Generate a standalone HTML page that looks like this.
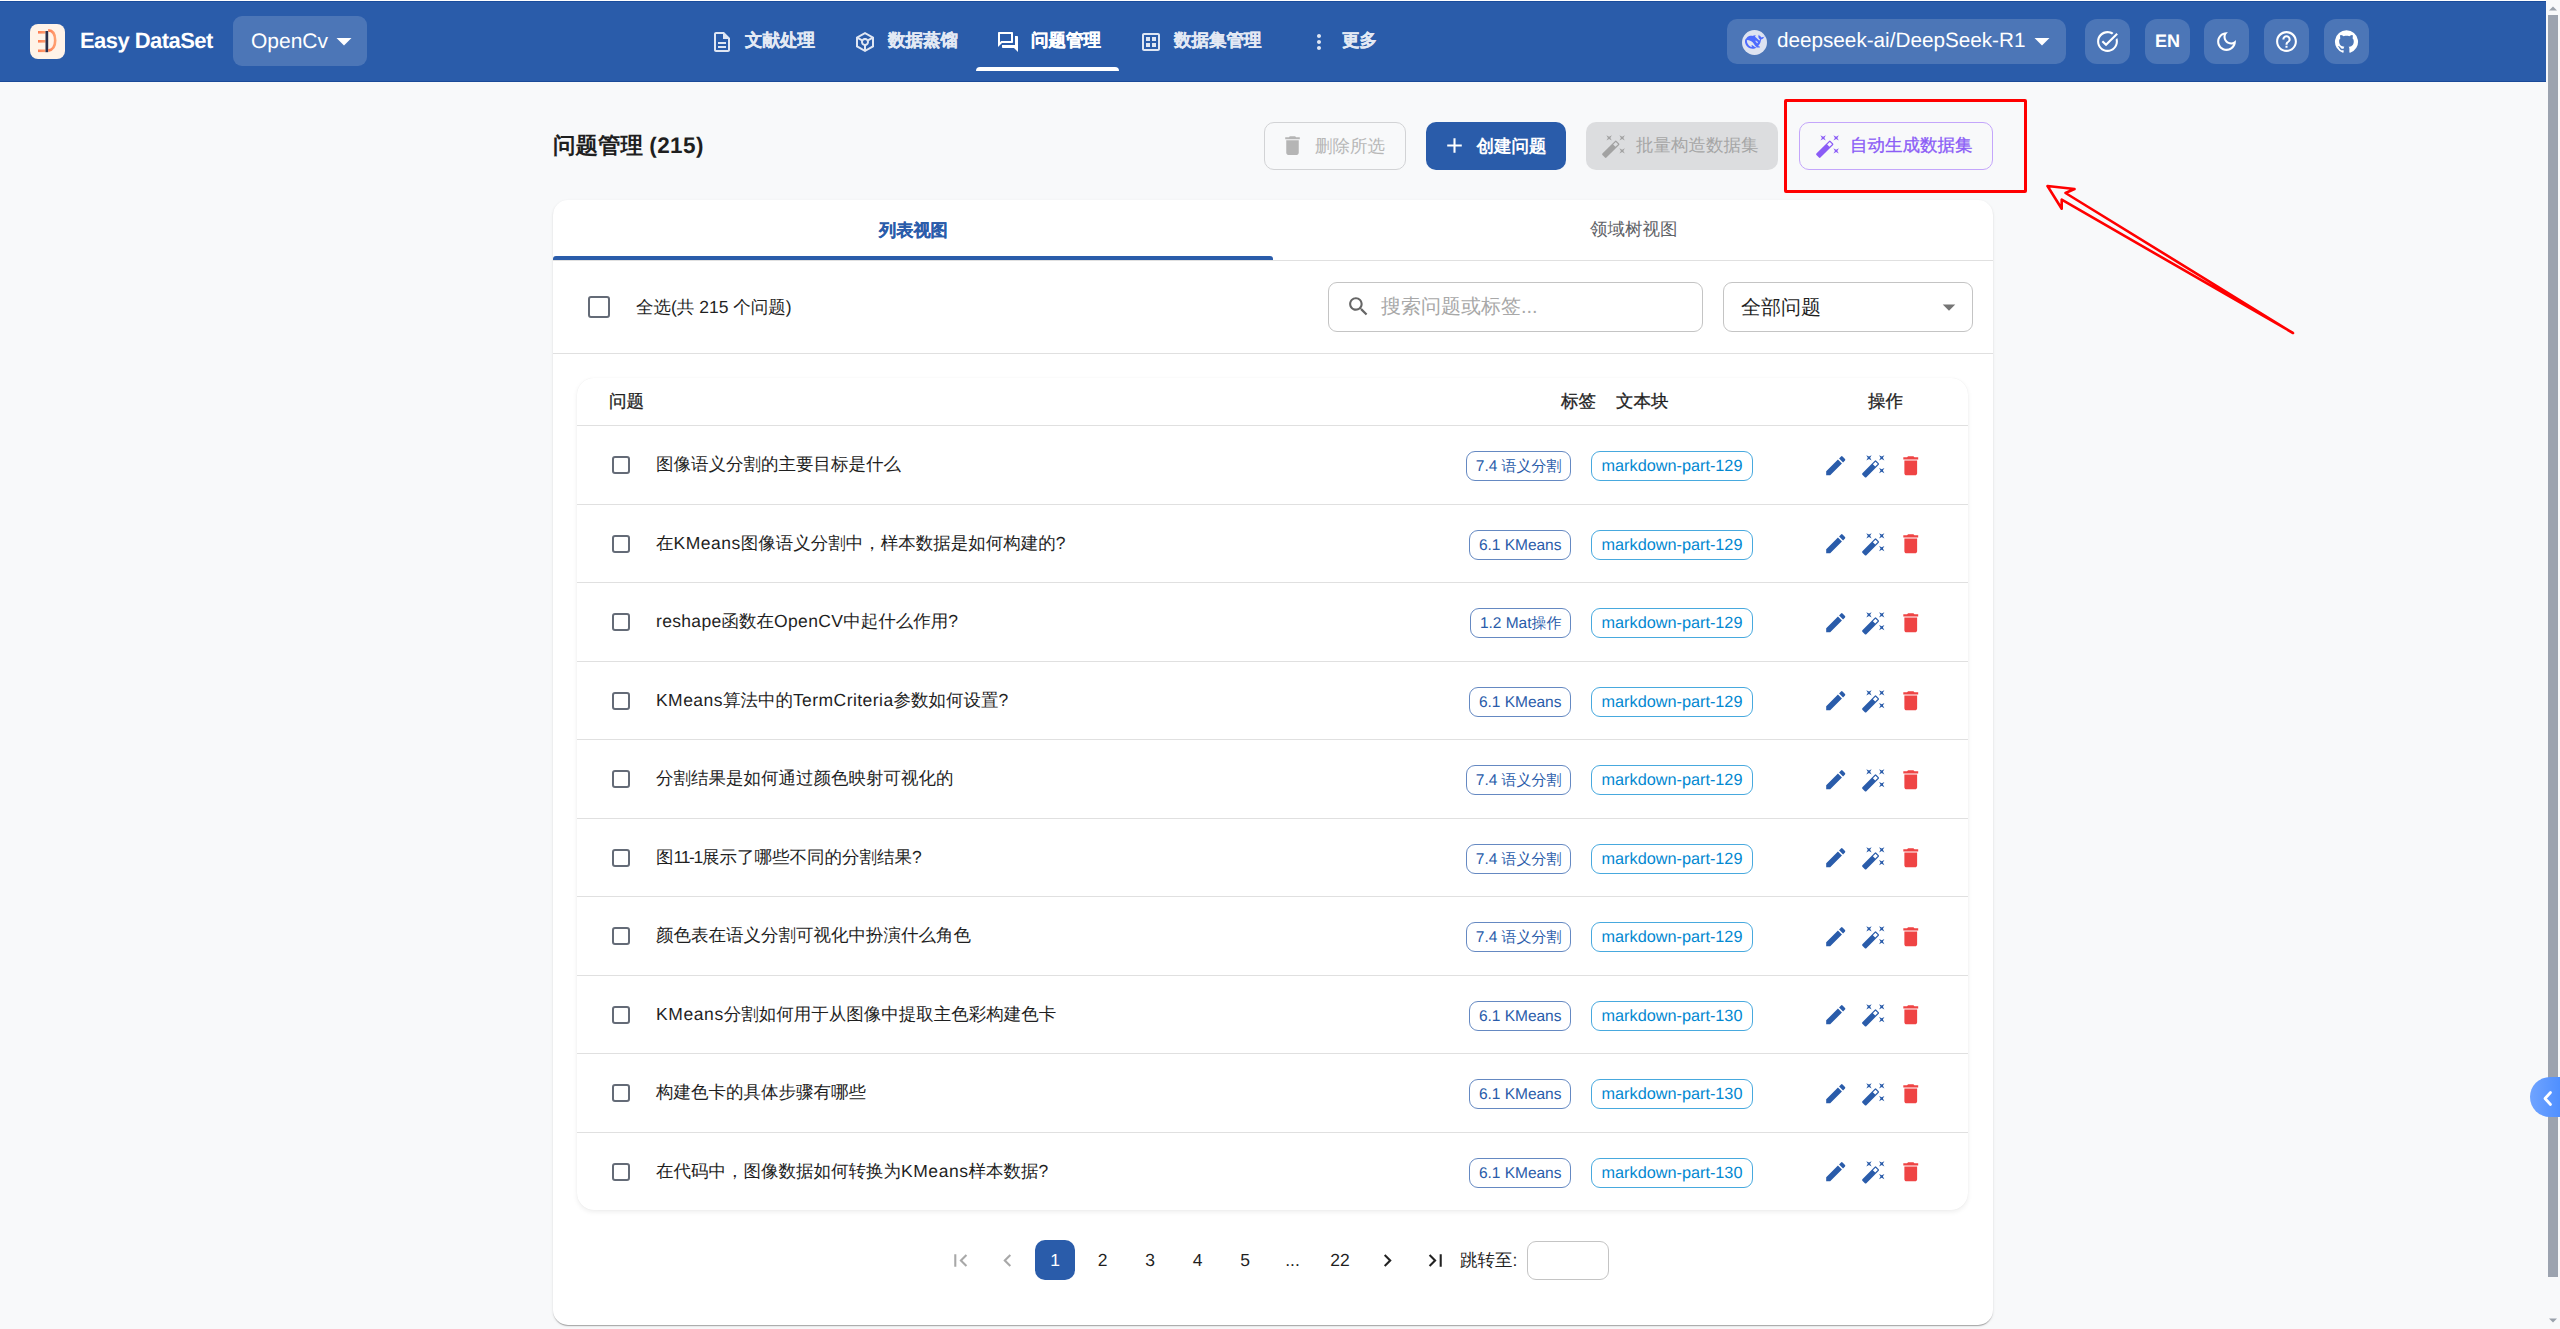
<!DOCTYPE html><html><head><meta charset="utf-8"><style>
*{box-sizing:border-box;margin:0;padding:0}
html,body{width:2560px;height:1329px;overflow:hidden;text-rendering:geometricPrecision;background:#f8f9fa;font-family:"Liberation Sans",sans-serif;color:#1f1f1f}
.abs{position:absolute}
svg{display:block}
.t{position:absolute;white-space:nowrap;line-height:20px}
#hdr{position:absolute;left:0;top:1px;width:2546px;height:81px;background:#2a5caa;border-top:1px solid #1a4c9c;border-bottom:1px solid #1a4a98}
#topline{position:absolute;left:0;top:0;width:2546px;height:1px;background:#fff}
.hbox{position:absolute;background:rgba(255,255,255,0.16);border-radius:10px}
.ibtn{position:absolute;top:19px;width:45px;height:45px;border-radius:12px;background:rgba(255,255,255,0.16)}
.nav{color:#e3e9f4;font-size:17.5px;font-weight:700;top:29.5px;-webkit-text-stroke:0.25px currentColor}
.btn{position:absolute;top:122px;height:48px;border-radius:10px;font-size:17.5px;line-height:20px;white-space:nowrap}
#card{position:absolute;left:553px;top:200px;width:1440px;height:1125px;background:#fff;border-radius:15px;box-shadow:0 2px 1px -1px rgba(0,0,0,0.2),0 1px 1px 0 rgba(0,0,0,0.1),0 1px 3px 0 rgba(0,0,0,0.1)}
#tblp{position:absolute;left:577px;top:378px;width:1391px;height:832px;background:#fff;border-radius:17px;box-shadow:0 2px 5px rgba(0,0,0,0.07),0 0 1px rgba(0,0,0,0.08)}
.rowline{position:absolute;left:577px;width:1391px;height:1px;background:#e0e0e0}
.cb{position:absolute;left:612px;width:18px;height:18px;border:2.4px solid #646b77;border-radius:3px}
.q{position:absolute;left:656px;font-size:17.5px;line-height:20px;color:#1f1f1f;white-space:nowrap}
.chip{position:absolute;height:30px;border-radius:9px;line-height:28px;text-align:center;white-space:nowrap}
.c1{right:989px;border:1px solid rgba(42,92,170,0.72);color:#2a5caa;padding:0 8.5px;font-size:15px;line-height:29.5px}
.c1 .l{font-size:15.5px}
.c2{left:1591px;width:162px;border:1px solid rgba(2,136,209,0.72);color:#0288d1;font-size:16.25px}
.pg{position:absolute;top:1240px;width:40px;height:40px;font-size:17.5px;line-height:40px;text-align:center;color:#1f1f1f}
.hd{font-size:17.5px;font-weight:400;-webkit-text-stroke:0.3px #1f1f1f;color:#1f1f1f;top:391px}
#scroll{position:absolute;left:2546px;top:0;width:14px;height:1329px;background:#f8f9fa}
</style></head><body>
<svg width="0" height="0" style="position:absolute"><defs><symbol id="i-edit" viewBox="0 0 24 24"><path d="M3 17.25V21h3.75L17.81 9.94l-3.75-3.75zM20.71 7.04c.39-.39.39-1.02 0-1.41l-2.34-2.34a.9959.9959 0 0 0-1.41 0l-1.83 1.83 3.75 3.75z"/></symbol><symbol id="i-wand" viewBox="0 0 24 24"><path d="M7.5 5.6 10 7 8.6 4.5 10 2 7.5 3.4 5 2l1.4 2.5L5 7zm12 9.8L17 14l1.4 2.5L17 19l2.5-1.4L22 19l-1.4-2.5L22 14zM22 2l-2.5 1.4L17 2l1.4 2.5L17 7l2.5-1.4L22 7l-1.4-2.5zm-7.63 5.29a.9959.9959 0 0 0-1.41 0L1.29 18.96c-.39.39-.39 1.02 0 1.41l2.34 2.34c.39.39 1.02.39 1.41 0L16.7 11.05c.39-.39.39-1.02 0-1.41zm-1.03 5.49-2.12-2.12 2.44-2.44 2.12 2.12z"/></symbol><symbol id="i-trash" viewBox="0 0 24 24"><path d="M6 19c0 1.1.9 2 2 2h8c1.1 0 2-.9 2-2V7H6zM19 4h-3.5l-1-1h-5l-1 1H5v2h14z"/></symbol></defs></svg>
<div id="topline"></div><div id="hdr"></div>
<div class="abs" style="left:30px;top:24px;width:35px;height:35px;border-radius:8px;background:#fff3e8"></div>
<svg class="abs" style="left:30px;top:24px" width="35" height="35" viewBox="0 0 35 35"><defs><linearGradient id="lg" x1="0" x2="1"><stop offset="0" stop-color="#ff7a50"/><stop offset="1" stop-color="#ffa070"/></linearGradient></defs><rect x="8" y="7" width="7.5" height="2.6" fill="url(#lg)"/><rect x="8" y="16" width="7.5" height="2.6" fill="url(#lg)"/><rect x="8" y="25.5" width="7.5" height="2.6" fill="url(#lg)"/><rect x="15.5" y="7" width="2.7" height="21.2" fill="#2b2f4a"/><path d="M18.2 6.4 C24.3 6.6 25.2 11.6 25.2 16.4 C25.2 21.4 23.6 25.6 18.2 26.6" fill="none" stroke="url(#lg)" stroke-width="2.6"/></svg>
<div class="abs" style="left:80px;top:28px;font-size:22px;font-weight:700;color:#fff;letter-spacing:-0.55px;line-height:25px;white-space:nowrap">Easy DataSet</div>
<div class="hbox" style="left:233px;top:16px;width:134px;height:50px;border-radius:9px"></div>
<div class="abs" style="left:251px;top:30px;font-size:21px;color:#fff;line-height:23px">OpenCv</div>
<svg class="abs" style="left:326px;top:23px" width="36" height="36" viewBox="0 0 24 24" fill="#fff"><path d="M7 10l5 5 5-5z"/></svg>
<svg class="abs" style="left:710px;top:30px" width="24" height="24" viewBox="0 0 24 24" fill="#dfe6f3"><path d="M8 16h8v2H8zm0-4h8v2H8zm6-10H6c-1.1 0-2 .9-2 2v16c0 1.1.89 2 1.99 2H18c1.1 0 2-.9 2-2V8zm4 18H6V4h7v5h5z"/></svg>
<div class="t nav" style="left:745px">文献处理</div>
<svg class="abs" style="left:853px;top:30px" width="24" height="24" viewBox="0 0 24 24" fill="#dfe6f3"><path d="m21 7-9-5-9 5v10l9 5 9-5zm-9-2.71 5.91 3.28-3.01 1.67C14.17 8.48 13.14 8 12 8s-2.170.48-2.9 1.24L6.09 7.57zm-1 14.87-6-3.33V9.26L8.13 11c-.09.31-.13.65-.13 1 0 1.86 1.27 3.43 3 3.87zM10 12c0-1.1.9-2 2-2s2 .9 2 2-.9 2-2 2-2-.9-2-2m3 7.16v-3.28c1.73-.44 3-2.01 3-3.87 0-.35-.04-.69-.13-1.01L19 9.26v6.57z"/></svg>
<div class="t nav" style="left:888px">数据蒸馏</div>
<svg class="abs" style="left:996px;top:30px" width="24" height="24" viewBox="0 0 24 24" fill="#fff"><path d="M15 4v7H5.17L4 12.17V4zm1-2H3c-.55 0-1 .45-1 1v14l4-4h10c.55 0 1-.45 1-1V3c0-.55-.45-1-1-1m5 4h-2v9H6v2c0 .55.45 1 1 1h11l4 4V7c0-.55-.45-1-1-1"/></svg>
<div class="t nav" style="left:1031px;color:#fff">问题管理</div>
<div class="abs" style="left:976px;top:67px;width:143px;height:4px;background:#fff;border-radius:4px 4px 0 0"></div>
<svg class="abs" style="left:1139px;top:30px" width="24" height="24" viewBox="0 0 24 24" fill="#dfe6f3"><path d="M19 3H5c-1.1 0-2 .9-2 2v14c0 1.1.9 2 2 2h14c1.1 0 2-.9 2-2V5c0-1.1-.9-2-2-2m0 16H5V5h14zM7 7h4v4H7zm6 0h4v4h-4zm-6 6h4v4H7zm6 0h4v4h-4z"/></svg>
<div class="t nav" style="left:1174px">数据集管理</div>
<svg class="abs" style="left:1307px;top:30px" width="24" height="24" viewBox="0 0 24 24" fill="#dfe6f3"><path d="M12 8c1.1 0 2-.9 2-2s-.9-2-2-2-2 .9-2 2 .9 2 2 2m0 2c-1.1 0-2 .9-2 2s.9 2 2 2 2-.9 2-2-.9-2-2-2m0 6c-1.1 0-2 .9-2 2s.9 2 2 2 2-.9 2-2-.9-2-2-2"/></svg>
<div class="t nav" style="left:1342px">更多</div>
<div class="hbox" style="left:1727px;top:19px;width:339px;height:45px"></div>
<div class="abs" style="left:1742px;top:30px;width:25px;height:25px;border-radius:50%;background:#dde3f1"></div>
<svg class="abs" style="left:1745px;top:32px" width="20" height="20" viewBox="0 0 24 24" fill="#4d6bfe"><path d="M23.7 4.9c-.25-.12-.36.11-.5.23-.05.04-.1.09-.14.13-.37.4-.8.65-1.36.62-.82-.05-1.52.2-2.14.83-.13-.77-.57-1.23-1.23-1.52-.35-.15-.7-.3-.94-.64-.17-.24-.22-.51-.3-.77-.05-.16-.1-.32-.29-.35-.2-.03-.28.14-.36.28-.3.56-.42 1.18-.41 1.8.03 1.4.62 2.5 1.79 3.3.13.09.17.18.13.32-.08.27-.18.53-.26.8-.05.17-.13.21-.31.14-.64-.27-1.2-.67-1.69-1.15-.83-.8-1.58-1.69-2.52-2.38-.22-.16-.44-.31-.67-.45-.96-.94.13-1.71.38-1.8.26-.1.09-.42-.76-.41-.85 0-1.62.29-2.6.66-.14.06-.3.1-.45.13-.9-.17-1.82-.21-2.78-.1-1.81.2-3.26 1.06-4.32 2.52C.06 8.6-.27 10.58.1 12.64c.38 2.18 1.49 3.98 3.2 5.39 1.77 1.46 3.8 2.18 6.12 2.04 1.41-.08 2.98-.27 4.750-1.77.45.22.92.31 1.69.38.59.06 1.17-.03 1.61-.12.7-.15.65-.8.4-.92-2.06-.96-1.61-.57-2.02-.89 1.05-1.24 2.63-2.53 3.25-6.72.05-.33.01-.54 0-.81 0-.16.03-.23.22-.25.51-.06 1.01-.2 1.48-.46 1.34-.73 1.88-1.94 2.01-3.38.02-.22 0-.45-.23-.56zM11.58 17.72c-2.01-1.58-2.98-2.1-3.39-2.08-.38.02-.31.46-.23.74.09.28.2.47.35.71.11.16.18.39-.1.56-.62.39-1.7-.13-1.75-.15-1.25-.74-2.3-1.71-3.04-3.04-.71-1.28-1.13-2.65-1.2-4.11-.02-.35.08-.48.44-.54.46-.09.94-.1 1.4-.03 1.97.29 3.64 1.17 5.04 2.56.8.79 1.4 1.74 2.03 2.67.67.99 1.39 1.93 2.3 2.7.32.27.58.48.82.63-.74.08-1.97.1-2.82-.57zm.93-5.98c0-.16.13-.28.29-.28.04 0 .07 0 .1.02.04.01.08.04.11.07.05.05.08.13.08.2 0 .16-.13.29-.29.29-.16 0-.29-.13-.29-.29zm2.87 1.48c-.18.08-.37.14-.55.15-.28.01-.59-.1-.76-.24-.26-.22-.45-.34-.52-.7-.03-.15-.01-.39.01-.52.06-.29-.01-.47-.21-.64-.16-.14-.37-.18-.6-.18-.09 0-.16-.04-.22-.07-.1-.05-.18-.17-.1-.33.03-.05.14-.17.17-.19.3-.17.65-.12.98.01.3.12.53.35.86.68.34.39.4.5.59.79.15.23.29.47.38.74.06.17-.02.31-.22.4z"/></svg>
<div class="abs" style="left:1777px;top:29px;font-size:20.7px;color:#fff;line-height:23px;white-space:nowrap">deepseek-ai/DeepSeek-R1</div>
<svg class="abs" style="left:2024px;top:23px" width="36" height="36" viewBox="0 0 24 24" fill="#fff"><path d="M7 10l5 5 5-5z"/></svg>
<div class="ibtn" style="left:2085px"></div>
<svg class="abs" style="left:2095px;top:29px" width="25" height="25" viewBox="0 0 24 24" fill="#fff"><path d="M22 5.18 10.59 16.6l-4.24-4.24 1.41-1.41 2.83 2.83 10-10L22 5.18zm-2.21 5.04c.13.57.21 1.17.21 1.78 0 4.42-3.58 8-8 8s-8-3.58-8-8 3.58-8 8-8c1.58 0 3.04.46 4.28 1.25l1.44-1.44C16.1 2.67 14.13 2 12 2 6.48 2 2 6.48 2 12s4.48 10 10 10 10-4.48 10-10c0-1.19-.22-2.33-.6-3.39l-1.61 1.61z"/></svg>
<div class="ibtn" style="left:2204px"></div>
<svg class="abs" style="left:2214px;top:29px" width="25" height="25" viewBox="0 0 24 24" fill="#fff"><path d="M9.37 5.51c-.18.64-.27 1.31-.27 1.99 0 4.08 3.32 7.4 7.4 7.4.68 0 1.35-.09 1.99-.27C17.45 17.19 14.93 19 12 19c-3.86 0-7-3.14-7-7 0-2.93 1.81-5.45 4.37-6.49M12 3c-4.97 0-9 4.03-9 9s4.03 9 9 9 9-4.03 9-9c0-.46-.04-.92-.1-1.36-.98 1.37-2.58 2.26-4.4 2.26-2.98 0-5.4-2.42-5.4-5.4 0-1.81.89-3.42 2.26-4.4-.44-.06-.9-.1-1.36-.1"/></svg>
<div class="ibtn" style="left:2264px"></div>
<svg class="abs" style="left:2274px;top:29px" width="25" height="25" viewBox="0 0 24 24" fill="#fff"><path d="M11 18h2v-2h-2zm1-16C6.48 2 2 6.48 2 12s4.48 10 10 10 10-4.48 10-10S17.52 2 12 2m0 18c-4.41 0-8-3.59-8-8s3.59-8 8-8 8 3.59 8 8-3.59 8-8 8m0-14c-2.21 0-4 1.79-4 4h2c0-1.1.9-2 2-2s2 .9 2 2c0 2-3 1.75-3 5h2c0-2.25 3-2.5 3-5 0-2.21-1.79-4-4-4"/></svg>
<div class="ibtn" style="left:2324px"></div>
<svg class="abs" style="left:2334px;top:29px" width="25" height="25" viewBox="0 0 24 24" fill="#fff"><path d="M12 1.27a11 11 0 00-3.48 21.46c.55.09.73-.28.73-.55v-1.84c-3.03.64-3.67-1.46-3.67-1.46-.55-1.29-1.28-1.65-1.28-1.65-.92-.65.1-.65.1-.65 1.1 0 1.73 1.1 1.73 1.1.92 1.65 2.57 1.2 3.21.92a2 2 0 01.64-1.47c-2.47-.27-5.04-1.19-5.04-5.5 0-1.1.46-2.1 1.2-2.84a3.76 3.76 0 010-2.93s.91-.28 3.11 1.1c1.8-.49 3.7-.49 5.5 0 2.1-1.38 3.02-1.1 3.02-1.1a3.76 3.76 0 010 2.93c.83.74 1.2 1.74 1.2 2.94 0 4.21-2.57 5.13-5.04 5.4.45.37.82.92.82 2.02v3.03c0 .27.1.64.73.55A11 11 0 0012 1.27"/></svg>
<div class="ibtn" style="left:2145px"></div><div class="abs" style="left:2145px;top:31px;width:45px;text-align:center;font-size:18px;font-weight:700;color:#fff;line-height:21px">EN</div>
<div class="abs" style="left:553px;top:133px;font-size:22.5px;font-weight:700;line-height:26px;color:#1f1f1f;white-space:nowrap">问题管理 <span style="letter-spacing:0.4px">(215)</span></div>
<div class="btn" style="left:1264px;width:142px;border:1px solid #d2d3d5"></div>
<svg class="abs" style="left:1280px;top:133px" width="25" height="25" viewBox="0 0 24 24" fill="#b5b5b5"><path d="M6 19c0 1.1.9 2 2 2h8c1.1 0 2-.9 2-2V7H6zM19 4h-3.5l-1-1h-5l-1 1H5v2h14z"/></svg>
<div class="t" style="left:1315px;top:135.5px;font-size:17.5px;color:#b7b7b7">删除所选</div>
<div class="btn" style="left:1426px;width:140px;background:#2a5caa"></div>
<svg class="abs" style="left:1442px;top:133px" width="25" height="25" viewBox="0 0 24 24" fill="#fff"><path d="M19 13h-6v6h-2v-6H5v-2h6V5h2v6h6z"/></svg>
<div class="t" style="left:1476.5px;top:135.5px;font-size:17.5px;color:#fff;font-weight:700">创建问题</div>
<div class="btn" style="left:1586px;width:192px;background:#dcdddf"></div>
<svg class="abs" style="left:1600.6px;top:132.8px" width="26" height="26" viewBox="0 0 24 24" fill="#a2a2a2"><path d="M7.5 5.6 10 7 8.6 4.5 10 2 7.5 3.4 5 2l1.4 2.5L5 7zm12 9.8L17 14l1.4 2.5L17 19l2.5-1.4L22 19l-1.4-2.5L22 14zM22 2l-2.5 1.4L17 2l1.4 2.5L17 7l2.5-1.4L22 7l-1.4-2.5zm-7.63 5.29a.9959.9959 0 0 0-1.41 0L1.29 18.96c-.39.39-.39 1.02 0 1.41l2.34 2.34c.39.39 1.02.39 1.41 0L16.7 11.05c.39-.39.39-1.02 0-1.41zm-1.03 5.49-2.12-2.12 2.44-2.44 2.12 2.12z"/></svg>
<div class="t" style="left:1636px;top:135px;font-size:17.5px;color:#a6a6a6">批量构造数据集</div>
<div class="btn" style="left:1799px;width:194px;border:1px solid #c4a6fb"></div>
<svg class="abs" style="left:1814.6px;top:132.8px" width="26" height="26" viewBox="0 0 24 24" fill="#8b5cf6"><path d="M7.5 5.6 10 7 8.6 4.5 10 2 7.5 3.4 5 2l1.4 2.5L5 7zm12 9.8L17 14l1.4 2.5L17 19l2.5-1.4L22 19l-1.4-2.5L22 14zM22 2l-2.5 1.4L17 2l1.4 2.5L17 7l2.5-1.4L22 7l-1.4-2.5zm-7.63 5.29a.9959.9959 0 0 0-1.41 0L1.29 18.96c-.39.39-.39 1.02 0 1.41l2.34 2.34c.39.39 1.02.39 1.41 0L16.7 11.05c.39-.39.39-1.02 0-1.41zm-1.03 5.49-2.12-2.12 2.44-2.44 2.12 2.12z"/></svg>
<div class="t" style="left:1850px;top:134.5px;font-size:17.5px;color:#8b5cf6;-webkit-text-stroke:0.3px #8b5cf6">自动生成数据集</div>
<div id="card"></div>
<div class="t" style="left:879px;top:219.5px;font-size:17.2px;font-weight:700;color:#2a5caa;-webkit-text-stroke:0.15px #2a5caa">列表视图</div>
<div class="t" style="left:1590px;top:219px;font-size:17.5px;color:#5f6368">领域树视图</div>
<div class="abs" style="left:553px;top:260px;width:1440px;height:1px;background:#e0e0e0"></div>
<div class="abs" style="left:553px;top:256px;width:720px;height:4px;background:#2a5caa;border-radius:3px 3px 0 0"></div>
<div class="abs" style="left:588px;top:296px;width:22px;height:22px;border:2.6px solid #646b77;border-radius:3px"></div>
<div class="t" style="left:636px;top:296.5px;font-size:17.5px">全选(共 215 个问题)</div>
<div class="abs" style="left:1328px;top:282px;width:375px;height:50px;border:1px solid #c4c4c4;border-radius:9px"></div>
<svg class="abs" style="left:1346px;top:294px" width="25" height="25" viewBox="0 0 24 24" fill="#666"><path d="M15.5 14h-.79l-.28-.27C15.41 12.59 16 11.11 16 9.5 16 5.91 13.09 3 9.5 3S3 5.91 3 9.5 5.91 16 9.5 16c1.61 0 3.09-.59 4.23-1.57l.27.28v.79l5 4.99L20.49 19zm-6 0C7.01 14 5 11.99 5 9.5S7.01 5 9.5 5 14 7.01 14 9.5 11.99 14 9.5 14"/></svg>
<div class="t" style="left:1381px;top:296.5px;font-size:20px;color:#a8a8a8">搜索问题或标签...</div>
<div class="abs" style="left:1723px;top:282px;width:250px;height:50px;border:1px solid #c4c4c4;border-radius:9px"></div>
<div class="t" style="left:1741px;top:298px;font-size:20px;color:#1f1f1f">全部问题</div>
<svg class="abs" style="left:1934px;top:292px" width="30" height="30" viewBox="0 0 24 24" fill="#757575"><path d="M7 10l5 5 5-5z"/></svg>
<div class="abs" style="left:553px;top:353px;width:1440px;height:1px;background:#e0e0e0"></div>
<div id="tblp"></div>
<div class="t hd" style="left:609px">问题</div>
<div class="t hd" style="left:1561px">标签</div>
<div class="t hd" style="left:1616px">文本块</div>
<div class="t hd" style="left:1868px">操作</div>
<div class="rowline" style="top:425px"></div>
<div class="cb" style="top:456.0px"></div>
<div class="q" style="top:454.0px">图像语义分割的主要目标是什么</div>
<div class="chip c1" style="top:451.0px"><span class="l">7.4</span> 语义分割</div>
<div class="chip c2" style="top:451.0px">markdown-part-129</div>
<svg class="abs" style="left:1822.5px;top:452.5px;fill:#2a5caa" width="25.5" height="25.5" viewBox="0 0 24 24"><use href="#i-edit"/></svg>
<svg class="abs" style="left:1860.5px;top:452.5px;fill:#2a5caa" width="25.5" height="25.5" viewBox="0 0 24 24"><use href="#i-wand"/></svg>
<svg class="abs" style="left:1897.5px;top:452.5px;fill:#ef4444" width="25.5" height="25.5" viewBox="0 0 24 24"><use href="#i-trash"/></svg>
<div class="rowline" style="top:504px"></div>
<div class="cb" style="top:534.5px"></div>
<div class="q" style="top:532.5px">在<span style="letter-spacing:0.5px">KMeans</span>图像语义分割中，样本数据是如何构建的<span style="letter-spacing:0.5px">?</span></div>
<div class="chip c1" style="top:529.5px"><span class="l">6.1</span> <span class="l">KMeans</span></div>
<div class="chip c2" style="top:529.5px">markdown-part-129</div>
<svg class="abs" style="left:1822.5px;top:531.0px;fill:#2a5caa" width="25.5" height="25.5" viewBox="0 0 24 24"><use href="#i-edit"/></svg>
<svg class="abs" style="left:1860.5px;top:531.0px;fill:#2a5caa" width="25.5" height="25.5" viewBox="0 0 24 24"><use href="#i-wand"/></svg>
<svg class="abs" style="left:1897.5px;top:531.0px;fill:#ef4444" width="25.5" height="25.5" viewBox="0 0 24 24"><use href="#i-trash"/></svg>
<div class="rowline" style="top:582px"></div>
<div class="cb" style="top:613.0px"></div>
<div class="q" style="top:611.0px"><span style="letter-spacing:0.33px">reshape</span>函数在<span style="letter-spacing:0.33px">OpenCV</span>中起什么作用<span style="letter-spacing:0.33px">?</span></div>
<div class="chip c1" style="top:608.0px"><span class="l">1.2</span> <span class="l">Mat</span>操作</div>
<div class="chip c2" style="top:608.0px">markdown-part-129</div>
<svg class="abs" style="left:1822.5px;top:609.5px;fill:#2a5caa" width="25.5" height="25.5" viewBox="0 0 24 24"><use href="#i-edit"/></svg>
<svg class="abs" style="left:1860.5px;top:609.5px;fill:#2a5caa" width="25.5" height="25.5" viewBox="0 0 24 24"><use href="#i-wand"/></svg>
<svg class="abs" style="left:1897.5px;top:609.5px;fill:#ef4444" width="25.5" height="25.5" viewBox="0 0 24 24"><use href="#i-trash"/></svg>
<div class="rowline" style="top:661px"></div>
<div class="cb" style="top:691.5px"></div>
<div class="q" style="top:689.5px"><span style="letter-spacing:0.45px">KMeans</span>算法中的<span style="letter-spacing:0.45px">TermCriteria</span>参数如何设置<span style="letter-spacing:0.45px">?</span></div>
<div class="chip c1" style="top:686.5px"><span class="l">6.1</span> <span class="l">KMeans</span></div>
<div class="chip c2" style="top:686.5px">markdown-part-129</div>
<svg class="abs" style="left:1822.5px;top:688.0px;fill:#2a5caa" width="25.5" height="25.5" viewBox="0 0 24 24"><use href="#i-edit"/></svg>
<svg class="abs" style="left:1860.5px;top:688.0px;fill:#2a5caa" width="25.5" height="25.5" viewBox="0 0 24 24"><use href="#i-wand"/></svg>
<svg class="abs" style="left:1897.5px;top:688.0px;fill:#ef4444" width="25.5" height="25.5" viewBox="0 0 24 24"><use href="#i-trash"/></svg>
<div class="rowline" style="top:739px"></div>
<div class="cb" style="top:770.0px"></div>
<div class="q" style="top:768.0px">分割结果是如何通过颜色映射可视化的</div>
<div class="chip c1" style="top:765.0px"><span class="l">7.4</span> 语义分割</div>
<div class="chip c2" style="top:765.0px">markdown-part-129</div>
<svg class="abs" style="left:1822.5px;top:766.5px;fill:#2a5caa" width="25.5" height="25.5" viewBox="0 0 24 24"><use href="#i-edit"/></svg>
<svg class="abs" style="left:1860.5px;top:766.5px;fill:#2a5caa" width="25.5" height="25.5" viewBox="0 0 24 24"><use href="#i-wand"/></svg>
<svg class="abs" style="left:1897.5px;top:766.5px;fill:#ef4444" width="25.5" height="25.5" viewBox="0 0 24 24"><use href="#i-trash"/></svg>
<div class="rowline" style="top:818px"></div>
<div class="cb" style="top:848.5px"></div>
<div class="q" style="top:846.5px">图<span style="letter-spacing:-1.3px">11-1</span>展示了哪些不同的分割结果<span style="letter-spacing:-1.3px">?</span></div>
<div class="chip c1" style="top:843.5px"><span class="l">7.4</span> 语义分割</div>
<div class="chip c2" style="top:843.5px">markdown-part-129</div>
<svg class="abs" style="left:1822.5px;top:845.0px;fill:#2a5caa" width="25.5" height="25.5" viewBox="0 0 24 24"><use href="#i-edit"/></svg>
<svg class="abs" style="left:1860.5px;top:845.0px;fill:#2a5caa" width="25.5" height="25.5" viewBox="0 0 24 24"><use href="#i-wand"/></svg>
<svg class="abs" style="left:1897.5px;top:845.0px;fill:#ef4444" width="25.5" height="25.5" viewBox="0 0 24 24"><use href="#i-trash"/></svg>
<div class="rowline" style="top:896px"></div>
<div class="cb" style="top:927.0px"></div>
<div class="q" style="top:925.0px">颜色表在语义分割可视化中扮演什么角色</div>
<div class="chip c1" style="top:922.0px"><span class="l">7.4</span> 语义分割</div>
<div class="chip c2" style="top:922.0px">markdown-part-129</div>
<svg class="abs" style="left:1822.5px;top:923.5px;fill:#2a5caa" width="25.5" height="25.5" viewBox="0 0 24 24"><use href="#i-edit"/></svg>
<svg class="abs" style="left:1860.5px;top:923.5px;fill:#2a5caa" width="25.5" height="25.5" viewBox="0 0 24 24"><use href="#i-wand"/></svg>
<svg class="abs" style="left:1897.5px;top:923.5px;fill:#ef4444" width="25.5" height="25.5" viewBox="0 0 24 24"><use href="#i-trash"/></svg>
<div class="rowline" style="top:975px"></div>
<div class="cb" style="top:1005.5px"></div>
<div class="q" style="top:1003.5px"><span style="letter-spacing:0.6px">KMeans</span>分割如何用于从图像中提取主色彩构建色卡</div>
<div class="chip c1" style="top:1000.5px"><span class="l">6.1</span> <span class="l">KMeans</span></div>
<div class="chip c2" style="top:1000.5px">markdown-part-130</div>
<svg class="abs" style="left:1822.5px;top:1002.0px;fill:#2a5caa" width="25.5" height="25.5" viewBox="0 0 24 24"><use href="#i-edit"/></svg>
<svg class="abs" style="left:1860.5px;top:1002.0px;fill:#2a5caa" width="25.5" height="25.5" viewBox="0 0 24 24"><use href="#i-wand"/></svg>
<svg class="abs" style="left:1897.5px;top:1002.0px;fill:#ef4444" width="25.5" height="25.5" viewBox="0 0 24 24"><use href="#i-trash"/></svg>
<div class="rowline" style="top:1053px"></div>
<div class="cb" style="top:1084.0px"></div>
<div class="q" style="top:1082.0px">构建色卡的具体步骤有哪些</div>
<div class="chip c1" style="top:1079.0px"><span class="l">6.1</span> <span class="l">KMeans</span></div>
<div class="chip c2" style="top:1079.0px">markdown-part-130</div>
<svg class="abs" style="left:1822.5px;top:1080.5px;fill:#2a5caa" width="25.5" height="25.5" viewBox="0 0 24 24"><use href="#i-edit"/></svg>
<svg class="abs" style="left:1860.5px;top:1080.5px;fill:#2a5caa" width="25.5" height="25.5" viewBox="0 0 24 24"><use href="#i-wand"/></svg>
<svg class="abs" style="left:1897.5px;top:1080.5px;fill:#ef4444" width="25.5" height="25.5" viewBox="0 0 24 24"><use href="#i-trash"/></svg>
<div class="rowline" style="top:1132px"></div>
<div class="cb" style="top:1162.5px"></div>
<div class="q" style="top:1160.5px">在代码中，图像数据如何转换为<span style="letter-spacing:0.55px">KMeans</span>样本数据<span style="letter-spacing:0.55px">?</span></div>
<div class="chip c1" style="top:1157.5px"><span class="l">6.1</span> <span class="l">KMeans</span></div>
<div class="chip c2" style="top:1157.5px">markdown-part-130</div>
<svg class="abs" style="left:1822.5px;top:1159.0px;fill:#2a5caa" width="25.5" height="25.5" viewBox="0 0 24 24"><use href="#i-edit"/></svg>
<svg class="abs" style="left:1860.5px;top:1159.0px;fill:#2a5caa" width="25.5" height="25.5" viewBox="0 0 24 24"><use href="#i-wand"/></svg>
<svg class="abs" style="left:1897.5px;top:1159.0px;fill:#ef4444" width="25.5" height="25.5" viewBox="0 0 24 24"><use href="#i-trash"/></svg>
<svg class="abs" style="left:948px;top:1248px" width="25" height="25" viewBox="0 0 24 24" fill="#a8a8a8"><path d="M18.41 16.59 13.82 12l4.59-4.59L17 6l-6 6 6 6zM6 6h2v12H6z"/></svg>
<svg class="abs" style="left:995px;top:1248px" width="25" height="25" viewBox="0 0 24 24" fill="#a8a8a8"><path d="M15.41 7.41 14 6l-6 6 6 6 1.41-1.41L10.83 12z"/></svg>
<div class="pg" style="left:1035px;background:#2a5caa;color:#fff;border-radius:10px">1</div>
<div class="pg" style="left:1082.5px">2</div>
<div class="pg" style="left:1130px">3</div>
<div class="pg" style="left:1177.5px">4</div>
<div class="pg" style="left:1225px">5</div>
<div class="pg" style="left:1272.5px">...</div>
<div class="pg" style="left:1320px">22</div>
<svg class="abs" style="left:1375px;top:1248px" width="25" height="25" viewBox="0 0 24 24" fill="#222"><path d="M10 6 8.59 7.41 13.17 12l-4.58 4.59L10 18l6-6z"/></svg>
<svg class="abs" style="left:1423px;top:1248px" width="25" height="25" viewBox="0 0 24 24" fill="#222"><path d="M5.59 7.41 10.18 12l-4.59 4.59L7 18l6-6-6-6zM16 6h2v12h-2z"/></svg>
<div class="t" style="left:1460px;top:1250px;font-size:17.5px">跳转至:</div>
<div class="abs" style="left:1527px;top:1241px;width:82px;height:39px;border:1px solid #c4c4c4;border-radius:9px"></div>
<div class="abs" style="left:1784px;top:99px;width:243px;height:94px;border:3px solid #ff0000;border-radius:2px"></div>
<svg class="abs" style="left:0;top:0" width="2560" height="1329" viewBox="0 0 2560 1329"><path d="M2047.5 186 L2074.5 189 L2065.5 193 L2293 333 L2061.7 199.7 L2061.7 208.7 Z" fill="none" stroke="#ff0000" stroke-width="2.6" stroke-linejoin="round"/></svg>
<div id="scroll"><svg class="abs" style="left:2px;top:5px" width="10" height="6" viewBox="0 0 10 6"><path d="M1 5.5 5 1.5 9 5.5z" fill="#9aa1ab"/></svg><div class="abs" style="left:2px;top:15px;width:10px;height:1262px;background:#9ca3af"></div><svg class="abs" style="left:2px;top:1318px" width="10" height="6" viewBox="0 0 10 6"><path d="M1 .5 5 4.5 9 .5z" fill="#9aa1ab"/></svg></div>
<div class="abs" style="left:2530px;top:1077px;width:50px;height:40px;border-radius:20px;background:linear-gradient(90deg,#70a4ff,#3a82ff)"></div>
<svg class="abs" style="left:2542px;top:1090px" width="12" height="17" viewBox="0 0 12 17"><path d="M8.5 2.5 3 8.5 8.5 14.5" fill="none" stroke="#fff" stroke-width="2.8" stroke-linecap="round" stroke-linejoin="round"/></svg>
</body></html>
